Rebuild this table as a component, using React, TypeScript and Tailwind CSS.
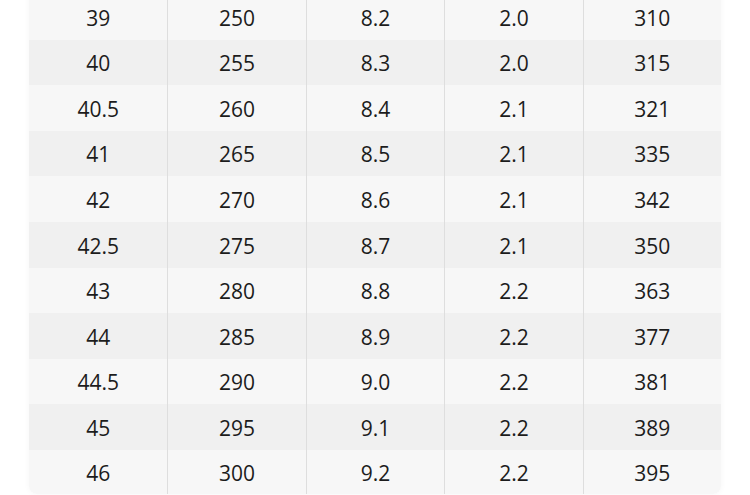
import React from 'react';

const rows: string[][] = [
  ['39', '250', '8.2', '2.0', '310'],
  ['40', '255', '8.3', '2.0', '315'],
  ['40.5', '260', '8.4', '2.1', '321'],
  ['41', '265', '8.5', '2.1', '335'],
  ['42', '270', '8.6', '2.1', '342'],
  ['42.5', '275', '8.7', '2.1', '350'],
  ['43', '280', '8.8', '2.2', '363'],
  ['44', '285', '8.9', '2.2', '377'],
  ['44.5', '290', '9.0', '2.2', '381'],
  ['45', '295', '9.1', '2.2', '389'],
  ['46', '300', '9.2', '2.2', '395'],
];

export default function App() {
  return (
    <div className="w-[750px] h-[495px] overflow-hidden bg-white" style={{ fontFamily: '"Open Sans", "Noto Sans", sans-serif' }}>
      <div className="mx-[29px] mt-[-6px] rounded-b-lg overflow-hidden shadow-[0_0_6px_rgba(0,0,0,0.04)]">
        {rows.map((row, i) => (
          <div
            key={i}
            className={`grid grid-cols-5 ${i === rows.length - 1 ? 'h-[44px]' : 'h-[45.6px]'} ${i % 2 === 0 ? 'bg-[#f7f7f7]' : 'bg-[#f0f0f0]'}`}
          >
            {row.map((cell, j) => (
              <div
                key={j}
                className={`flex items-center justify-center pt-[3px] text-[21px] text-[#1c1c1c] ${j > 0 ? 'border-l border-[#dedede]' : ''}`}
              >
                {cell}
              </div>
            ))}
          </div>
        ))}
      </div>
    </div>
  );
}
